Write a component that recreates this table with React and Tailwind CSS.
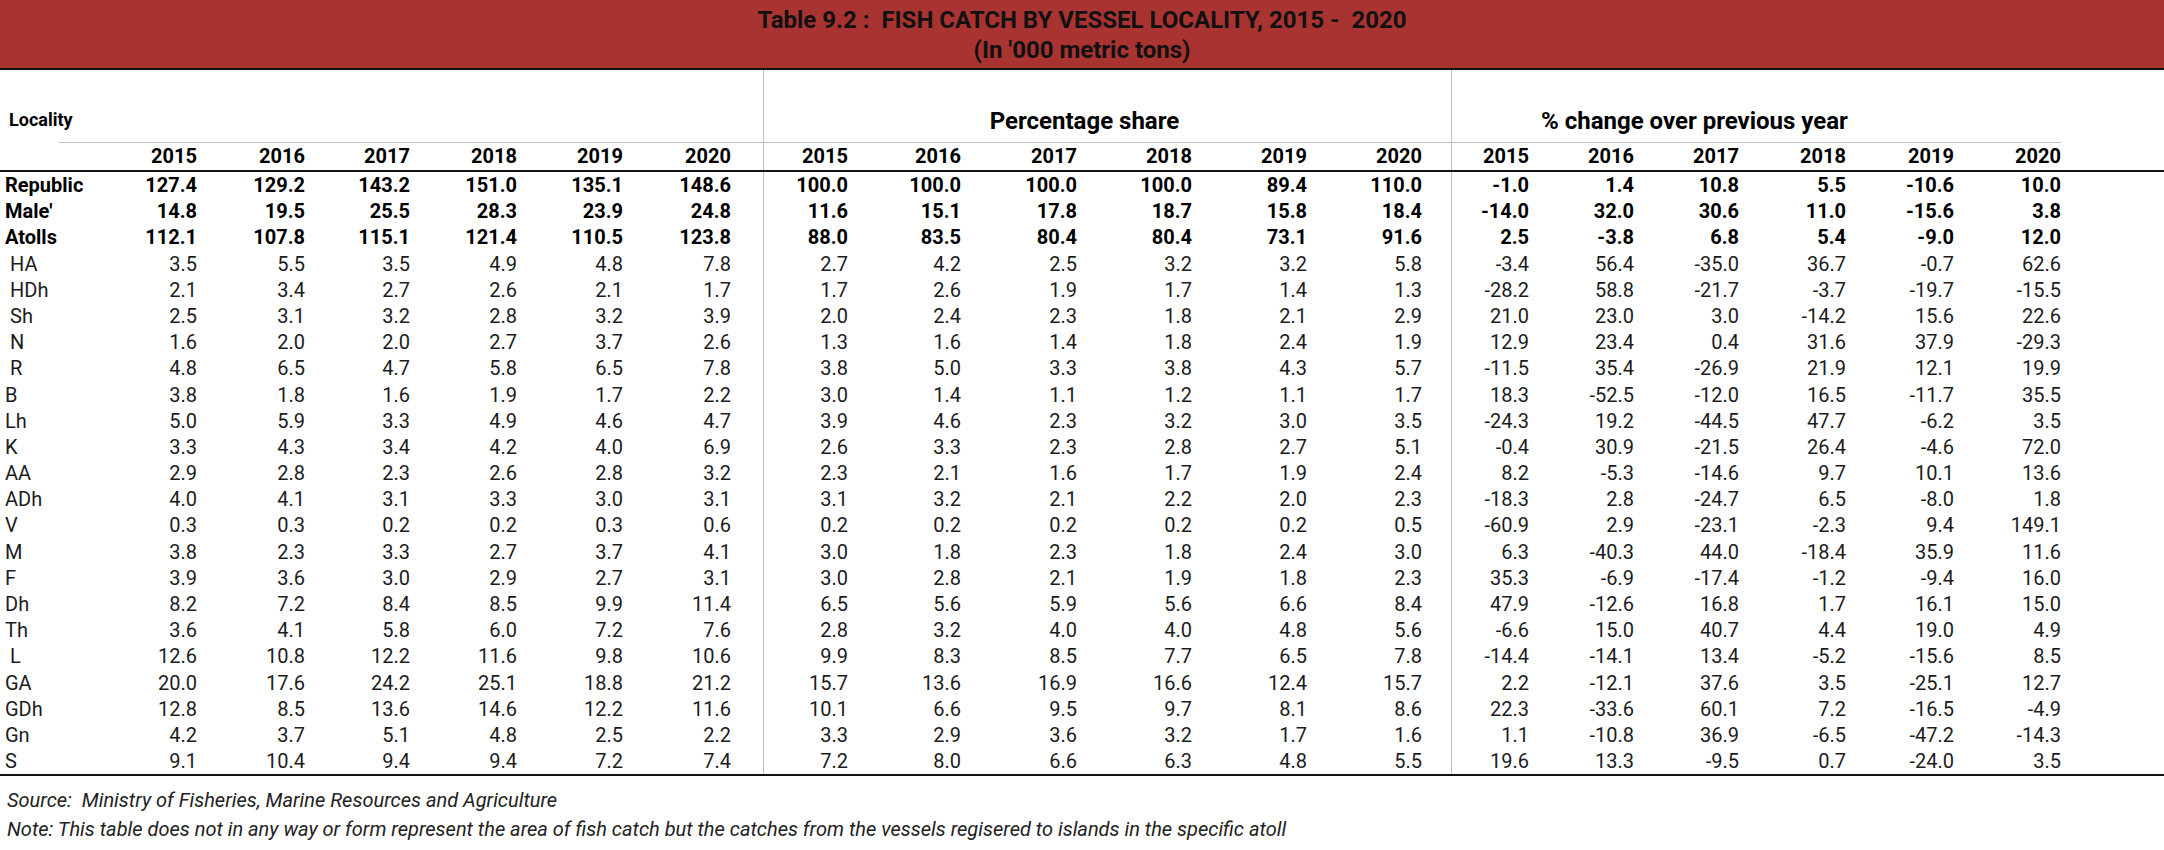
const COLS =
  "grid grid-cols-[59px_138px_108px_105px_107px_106px_108px_33px_84px_113px_116px_115px_115px_115px_30px_77px_105px_105px_107px_108px_107px_1fr]";

const years = ["2015", "2016", "2017", "2018", "2019", "2020"];

// label | catch (6) | percentage share (6) | % change (6)
const rows = [
  ["Republic", "127.4 129.2 143.2 151.0 135.1 148.6", "100.0 100.0 100.0 100.0 89.4 110.0", "-1.0 1.4 10.8 5.5 -10.6 10.0", true],
  ["Male'", "14.8 19.5 25.5 28.3 23.9 24.8", "11.6 15.1 17.8 18.7 15.8 18.4", "-14.0 32.0 30.6 11.0 -15.6 3.8", true],
  ["Atolls", "112.1 107.8 115.1 121.4 110.5 123.8", "88.0 83.5 80.4 80.4 73.1 91.6", "2.5 -3.8 6.8 5.4 -9.0 12.0", true],
  [" HA", "3.5 5.5 3.5 4.9 4.8 7.8", "2.7 4.2 2.5 3.2 3.2 5.8", "-3.4 56.4 -35.0 36.7 -0.7 62.6"],
  [" HDh", "2.1 3.4 2.7 2.6 2.1 1.7", "1.7 2.6 1.9 1.7 1.4 1.3", "-28.2 58.8 -21.7 -3.7 -19.7 -15.5"],
  [" Sh", "2.5 3.1 3.2 2.8 3.2 3.9", "2.0 2.4 2.3 1.8 2.1 2.9", "21.0 23.0 3.0 -14.2 15.6 22.6"],
  [" N", "1.6 2.0 2.0 2.7 3.7 2.6", "1.3 1.6 1.4 1.8 2.4 1.9", "12.9 23.4 0.4 31.6 37.9 -29.3"],
  [" R", "4.8 6.5 4.7 5.8 6.5 7.8", "3.8 5.0 3.3 3.8 4.3 5.7", "-11.5 35.4 -26.9 21.9 12.1 19.9"],
  ["B", "3.8 1.8 1.6 1.9 1.7 2.2", "3.0 1.4 1.1 1.2 1.1 1.7", "18.3 -52.5 -12.0 16.5 -11.7 35.5"],
  ["Lh", "5.0 5.9 3.3 4.9 4.6 4.7", "3.9 4.6 2.3 3.2 3.0 3.5", "-24.3 19.2 -44.5 47.7 -6.2 3.5"],
  ["K", "3.3 4.3 3.4 4.2 4.0 6.9", "2.6 3.3 2.3 2.8 2.7 5.1", "-0.4 30.9 -21.5 26.4 -4.6 72.0"],
  ["AA", "2.9 2.8 2.3 2.6 2.8 3.2", "2.3 2.1 1.6 1.7 1.9 2.4", "8.2 -5.3 -14.6 9.7 10.1 13.6"],
  ["ADh", "4.0 4.1 3.1 3.3 3.0 3.1", "3.1 3.2 2.1 2.2 2.0 2.3", "-18.3 2.8 -24.7 6.5 -8.0 1.8"],
  ["V", "0.3 0.3 0.2 0.2 0.3 0.6", "0.2 0.2 0.2 0.2 0.2 0.5", "-60.9 2.9 -23.1 -2.3 9.4 149.1"],
  ["M", "3.8 2.3 3.3 2.7 3.7 4.1", "3.0 1.8 2.3 1.8 2.4 3.0", "6.3 -40.3 44.0 -18.4 35.9 11.6"],
  ["F", "3.9 3.6 3.0 2.9 2.7 3.1", "3.0 2.8 2.1 1.9 1.8 2.3", "35.3 -6.9 -17.4 -1.2 -9.4 16.0"],
  ["Dh", "8.2 7.2 8.4 8.5 9.9 11.4", "6.5 5.6 5.9 5.6 6.6 8.4", "47.9 -12.6 16.8 1.7 16.1 15.0"],
  ["Th", "3.6 4.1 5.8 6.0 7.2 7.6", "2.8 3.2 4.0 4.0 4.8 5.6", "-6.6 15.0 40.7 4.4 19.0 4.9"],
  [" L", "12.6 10.8 12.2 11.6 9.8 10.6", "9.9 8.3 8.5 7.7 6.5 7.8", "-14.4 -14.1 13.4 -5.2 -15.6 8.5"],
  ["GA", "20.0 17.6 24.2 25.1 18.8 21.2", "15.7 13.6 16.9 16.6 12.4 15.7", "2.2 -12.1 37.6 3.5 -25.1 12.7"],
  ["GDh", "12.8 8.5 13.6 14.6 12.2 11.6", "10.1 6.6 9.5 9.7 8.1 8.6", "22.3 -33.6 60.1 7.2 -16.5 -4.9"],
  ["Gn", "4.2 3.7 5.1 4.8 2.5 2.2", "3.3 2.9 3.6 3.2 1.7 1.6", "1.1 -10.8 36.9 -6.5 -47.2 -14.3"],
  ["S", "9.1 10.4 9.4 9.4 7.2 7.4", "7.2 8.0 6.6 6.3 4.8 5.5", "19.6 13.3 -9.5 0.7 -24.0 3.5"],
];

const Sep = () => <div className="border-r border-[#bfbfbf]" />;

const Cells = ({ values }) =>
  values.map((v, i) => (
    <div key={i} className="text-right whitespace-nowrap">
      {v}
    </div>
  ));

const DataRow = ({ row }) => {
  const [label, a, b, c, bold] = row;
  const indent = label.startsWith(" ");
  return (
    <div className={`${COLS} h-[26.2px] leading-[26px] ${bold ? "font-bold text-black" : "text-[#1c1c1c]"}`}>
      <div className={`whitespace-nowrap overflow-visible ${indent ? "pl-[10px]" : "pl-[5px]"}`}>
        {label.trim()}
      </div>
      <Cells values={a.split(" ")} />
      <Sep />
      <Cells values={b.split(" ")} />
      <Sep />
      <Cells values={c.split(" ")} />
      <div />
    </div>
  );
};

export default function App() {
  return (
    <div className="w-[2164px] h-[850px] bg-white overflow-hidden font-['Roboto',sans-serif] text-[20px] text-black">
      {/* title band */}
      <div className="h-[70px] bg-[#a93331] border-b-2 border-[#111] flex flex-col items-center pt-[5px] font-bold text-[24px] leading-[30px] text-[#111]">
        <div className="whitespace-pre">Table 9.2 :  FISH CATCH BY VESSEL LOCALITY, 2015 -  2020</div>
        <div>(In '000 metric tons)</div>
      </div>

      {/* group titles */}
      <div className={`${COLS} h-[73px]`}>
        <div className="self-end pb-[10px] pl-[9px] font-bold text-[18px] whitespace-nowrap">Locality</div>
        <div className="col-span-7 border-r border-b border-[#bfbfbf]" />
        <div className="col-span-7 border-r border-b border-[#bfbfbf] flex items-end justify-center pr-[46px] pb-[3px] font-bold text-[24px]">
          Percentage share
        </div>
        <div className="col-span-6 border-b border-[#bfbfbf] flex items-end pl-[89px] pb-[3px] font-bold text-[24px] whitespace-nowrap">
          % change over previous year
        </div>
        <div />
      </div>

      {/* years */}
      <div className={`${COLS} h-[29px] leading-[27px] border-b-2 border-[#111] font-bold`}>
        <div />
        <Cells values={years} />
        <Sep />
        <Cells values={years} />
        <Sep />
        <Cells values={years} />
        <div />
      </div>

      {/* body */}
      <div className="border-b-2 border-[#111]">
        {rows.map((r) => (
          <DataRow key={r[0]} row={r} />
        ))}
      </div>

      {/* notes */}
      <div className="pt-[10px] pl-[7px] italic text-[20px] leading-[29px] text-[#222]">
        <div className="whitespace-pre">Source:  Ministry of Fisheries, Marine Resources and Agriculture</div>
        <div>Note: This table does not in any way or form represent the area of fish catch but the catches from the vessels regisered to islands in the specific atoll</div>
      </div>
    </div>
  );
}
